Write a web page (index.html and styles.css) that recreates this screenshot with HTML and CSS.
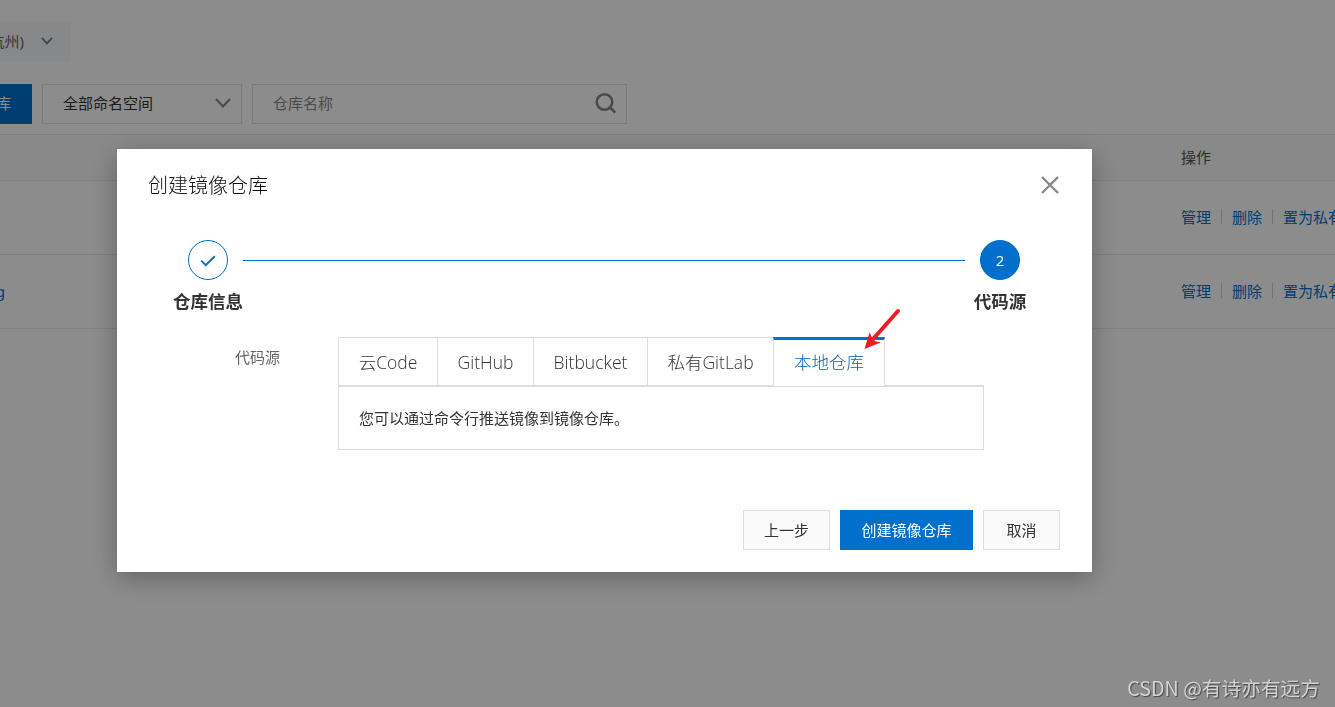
FILE: index.html
```html
<!DOCTYPE html>
<html lang="zh-CN">
  <head>
    <meta charset="utf-8">
    <title>创建镜像仓库</title>
    <link rel="stylesheet" href="styles.css">
  </head>
  <body>
    <div class="page">
      <div class="region">
        <span>(杭州)</span>
        <svg width="12" height="8" viewBox="0 0 12 8"><path d="M1 1l5 5.4L11 1"/></svg>
      </div>

      <div class="toolbar">
        <button class="btn-create">库</button>
        <div class="select">
          <span>全部命名空间</span>
          <svg width="16" height="10" viewBox="0 0 16 10"><path d="M1 1l7 7.5L15 1"/></svg>
        </div>
        <div class="search">
          <span>仓库名称</span>
          <svg width="22" height="22" viewBox="0 0 22 22"><circle cx="9.5" cy="10" r="7.8"/><path d="M15.3 15.8l5 4.8"/></svg>
        </div>
      </div>

      <div class="table">
        <div class="row head"><span class="actions">操作</span></div>
        <div class="row">
          <span class="name"></span>
          <span class="actions"><a>管理</a><i></i><a>删除</a><i></i><a>置为私有</a></span>
        </div>
        <div class="row">
          <span class="name">g</span>
          <span class="actions"><a>管理</a><i></i><a>删除</a><i></i><a>置为私有</a></span>
        </div>
      </div>
    </div>

    <div class="overlay">
      <div class="modal">
        <div class="modal-header">
          <h1>创建镜像仓库</h1>
          <svg class="close" width="18" height="18" viewBox="0 0 18 18"><path d="M1 1l16 16M17 1L1 17"/></svg>
        </div>

        <div class="steps">
          <div class="step">
            <div class="circle">
              <svg width="16" height="12" viewBox="0 0 16 12"><path d="M1.2 5.6l4.6 4.6L14.8 1.2"/></svg>
            </div>
            <b>仓库信息</b>
          </div>
          <div class="line"></div>
          <div class="step">
            <div class="circle current">2</div>
            <b>代码源</b>
          </div>
        </div>

        <div class="field">
          <label>代码源</label>
          <div class="source">
            <ul class="tabs">
              <li class="t1"><span>云Code</span></li>
              <li class="t2"><span>GitHub</span></li>
              <li class="t3"><span>Bitbucket</span></li>
              <li class="t4"><span>私有GitLab</span></li>
              <li class="t5 active"><span>本地仓库</span>
                <svg class="arrow" width="40" height="44" viewBox="0 0 40 44"><path class="shaft" d="M35 4L11 31"/><path class="tip" d="M1.5 42L6.5 25.5L9 30.5L12 34L17.5 35.5z"/></svg>
              </li>
            </ul>
            <div class="panel">您可以通过命令行推送镜像到镜像仓库。</div>
          </div>
        </div>

        <div class="modal-footer">
          <button class="prev">上一步</button>
          <button class="primary">创建镜像仓库</button>
          <button class="cancel">取消</button>
        </div>
      </div>
      <div class="watermark">CSDN @有诗亦有远方</div>
    </div>
  </body>
</html>
```

FILE: styles.css
```css
* {
  box-sizing: border-box;
}
body {
  margin: 0;
  height: 707px;
  overflow: hidden;
  background: #fff;
  color: #333;
  font-family: "Open Sans", "Noto Sans CJK SC", sans-serif;
  font-size: 15px;
  line-height: 20px;
}
svg {
  fill: none;
  flex: none;
}
button {
  padding: 0;
  font: inherit;
  white-space: nowrap;
}

/* page behind the dialog */
.page {
  height: 707px;
  padding-top: 21px;
  overflow: hidden;
}
.region {
  display: flex;
  justify-content: flex-end;
  align-items: center;
  gap: 17px;
  width: 71px;
  height: 40px;
  padding-right: 18px;
  border-radius: 2px;
  background: #f5f7fa;
  color: #666;
  white-space: nowrap;
}
.region svg {
  stroke: #777;
  stroke-width: 1.8;
}
.toolbar {
  display: flex;
  gap: 10px;
  margin-top: 23px;
}
.btn-create {
  display: flex;
  justify-content: flex-end;
  align-items: center;
  width: 32px;
  height: 40px;
  padding: 0 21px 2px 0;
  border: none;
  background: #0070cc;
  color: #fff;
}
.select, .search {
  display: flex;
  justify-content: space-between;
  align-items: center;
  height: 40px;
  padding: 0 10px 2px 20px;
  border: 1px solid #dedede;
}
.select {
  width: 200px;
}
.search {
  width: 375px;
  padding-right: 9px;
  color: #888;
}
.select svg, .search svg {
  stroke: #888;
  stroke-width: 2;
}
.search svg {
  stroke-width: 2.6;
}
.table {
  margin-top: 10px;
  border-top: 1px solid #e7e7e7;
}
.row {
  display: flex;
  align-items: center;
  height: 74px;
  padding-bottom: 2px;
  border-bottom: 1px solid #e7e7e7;
}
.head {
  height: 46px;
  background: #fafafa;
  color: #555;
}
.name {
  display: flex;
  flex: none;
  justify-content: flex-end;
  width: 6px;
  padding-right: 1px;
  color: #0070cc;
  font-family: "Noto Sans", sans-serif;
}
.actions {
  display: flex;
  flex: none;
  align-items: center;
  margin-left: 1175px;
  white-space: nowrap;
}
.head .actions {
  margin-left: 1181px;
}
.actions a {
  color: #0070cc;
}
.actions i {
  width: 1px;
  height: 15px;
  margin: 0 10px;
  background: #d0d0d0;
}

/* dialog */
.overlay {
  position: fixed;
  top: 0;
  right: 0;
  bottom: 0;
  left: 0;
  padding: 149px 0 0 117px;
  background: rgba(0, 0, 0, 0.45);
}
.modal {
  width: 975px;
  height: 423px;
  padding: 22px 32px;
  background: #fff;
  box-shadow: 0 6px 25px rgba(0, 0, 0, 0.3);
}
.modal-header {
  display: flex;
  justify-content: space-between;
  align-items: center;
  height: 28px;
}
h1 {
  margin: 2px 0 0 -1px;
  color: #111;
  font-size: 20px;
  font-weight: 300;
}
.close {
  margin: 0 1px 1px 0;
  stroke: #888;
  stroke-width: 2.4;
}
.steps {
  display: flex;
  margin: 41px 23px 0 22px;
}
.step {
  display: flex;
  flex-direction: column;
  align-items: center;
  gap: 11px;
  width: 74px;
  white-space: nowrap;
}
.step b {
  margin-bottom: 1px;
  font-size: 17.5px;
}
.circle {
  display: flex;
  justify-content: center;
  align-items: center;
  width: 40px;
  height: 40px;
  border: 1px solid #0070cc;
  border-radius: 50%;
}
.circle svg {
  margin-top: 2px;
  stroke: #0070cc;
  stroke-width: 2;
}
.current {
  background: #0070cc;
  color: #fff;
}
.line {
  flex: 1;
  height: 1px;
  margin: 20px -2px 0;
  background: #0070cc;
}
.field {
  display: flex;
  margin: 25px 0 0 86px;
}
label {
  width: 103px;
  padding-top: 10px;
  color: #666;
}
.source {
  width: 646px;
}
.tabs {
  display: flex;
  height: 49px;
  margin: 0;
  padding: 0;
  list-style: none;
  border-bottom: 1px solid #dedede;
}
.tabs li {
  display: flex;
  justify-content: center;
  align-items: center;
  border-top: 1px solid #dedede;
  border-left: 1px solid #dedede;
  color: #333;
  font-size: 17.5px;
  font-weight: 300;
  white-space: nowrap;
}
.t1 {
  width: 99px;
}
.t2 {
  width: 96px;
}
.t3 {
  width: 114px;
}
.t4 {
  width: 126px;
}
.tabs .active {
  position: relative;
  width: 112px;
  height: 49px;
  padding-bottom: 2px;
  border-top: 3px solid #0070cc;
  border-right: 1px solid #dedede;
  background: #fff;
  color: #0062b8;
}
.arrow {
  position: absolute;
  top: -33px;
  left: 89px;
}
.shaft {
  stroke: #ee1c25;
  stroke-width: 4;
  stroke-linecap: round;
}
.tip {
  fill: #ee1c25;
}
.panel {
  height: 64px;
  padding: 21px 20px;
  border: 1px solid #dedede;
}
.modal-footer {
  display: flex;
  justify-content: flex-end;
  gap: 10px;
  margin-top: 60px;
}
.modal-footer button {
  height: 40px;
  border: 1px solid #dedede;
  background: #fafafa;
  color: #333;
}
.modal-footer .prev {
  width: 87px;
}
.modal-footer .primary {
  width: 133px;
  border-color: #0070cc;
  background: #0070cc;
  color: #fff;
}
.modal-footer .cancel {
  width: 77px;
}
.watermark {
  position: absolute;
  right: 15px;
  bottom: 9px;
  color: #d4d4d4;
  font-family: "Noto Sans CJK SC", sans-serif;
  font-size: 19.7px;
  text-shadow: 1px 1px 1px #444;
}
```
